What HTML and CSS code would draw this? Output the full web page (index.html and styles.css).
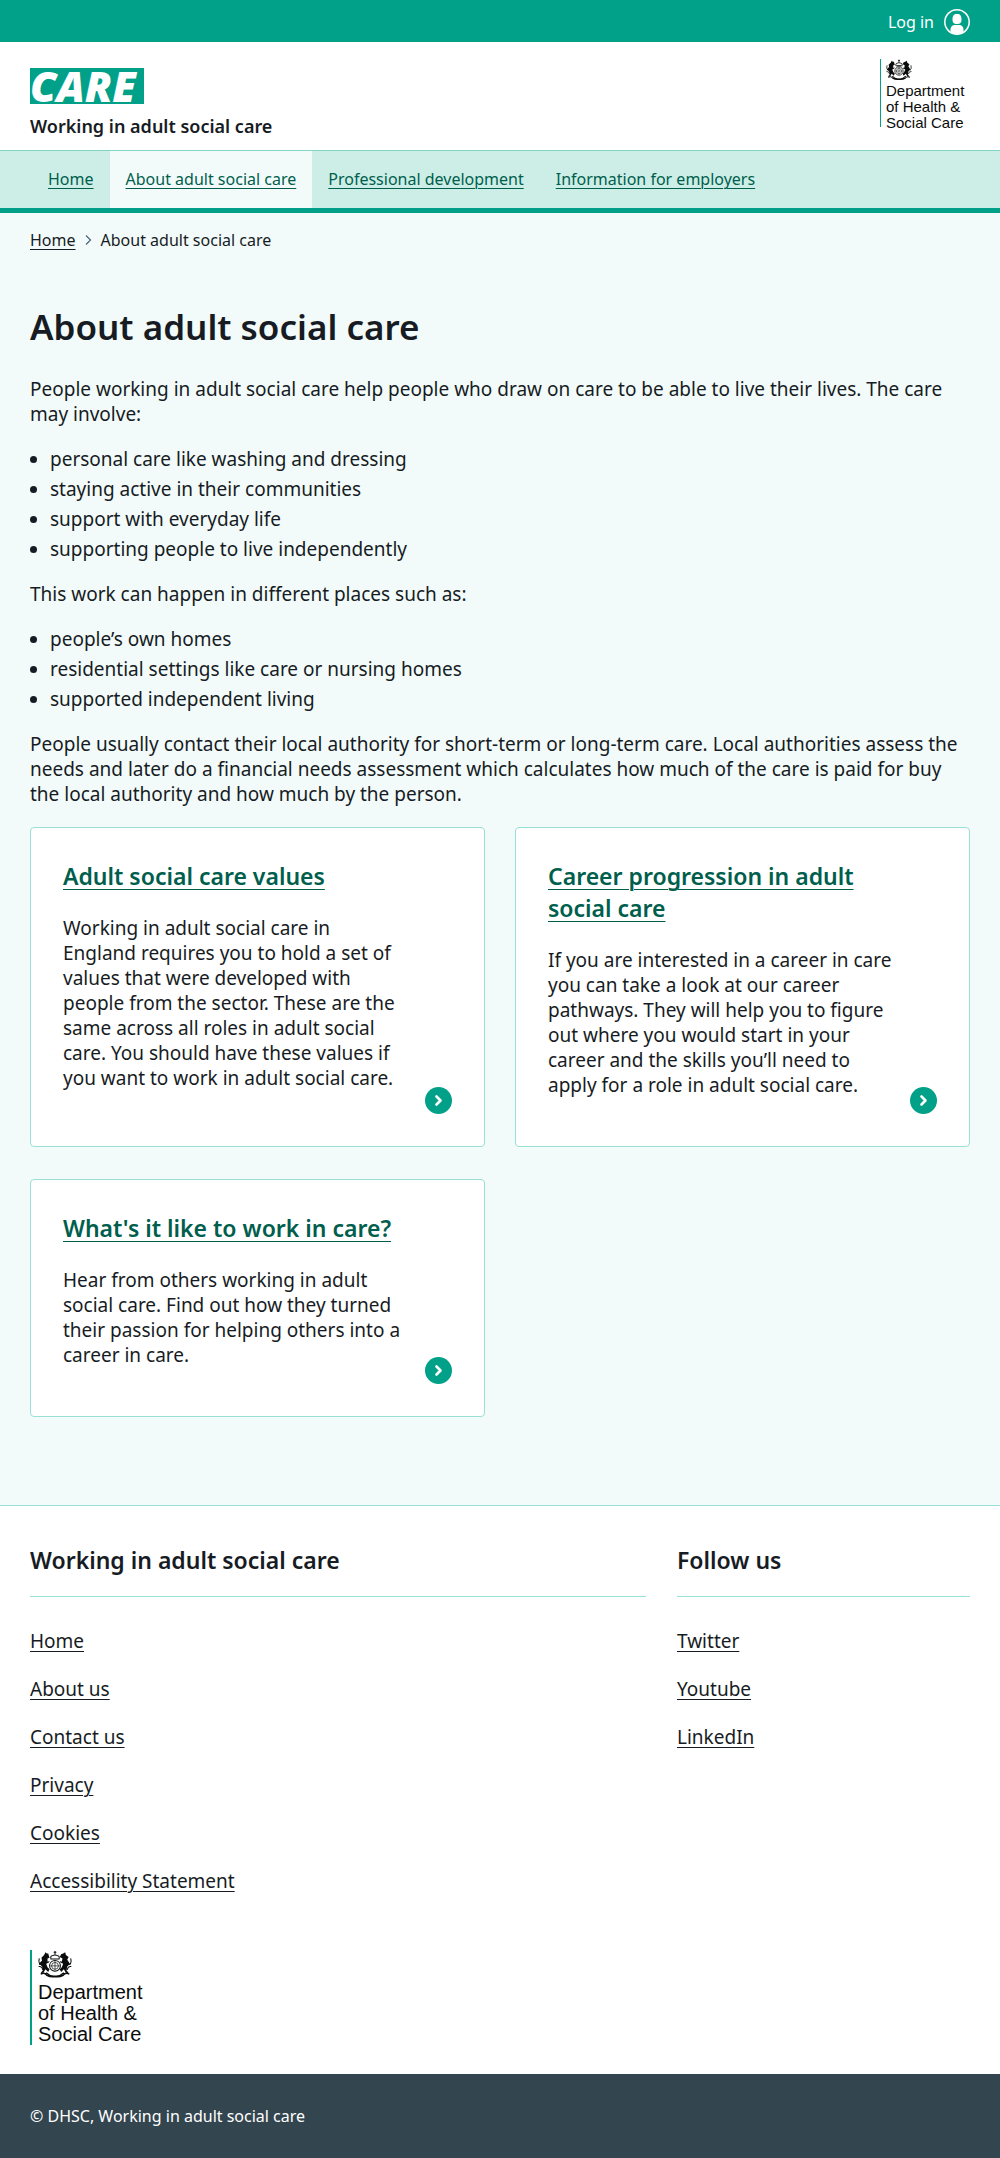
FILE: index.html
```html
<!DOCTYPE html>
<html lang="en">
<head>
<meta charset="utf-8">
<meta name="viewport" content="width=device-width, initial-scale=1">
<title>About adult social care</title>
<link rel="stylesheet" href="styles.css">
</head>
<body>
<svg class="defs" aria-hidden="true">
  <symbol id="crest" viewBox="0 0 50 42">
    <g fill="none" stroke="currentColor" stroke-width="1.500">
      <circle cx="25" cy="23" r="8"/>
      <circle cx="25" cy="23" r="5" stroke-width="1"/>
      <path d="M25 16v14M18 23h14" stroke-width="1"/>
      <path d="M19 13q-1-5 2-5q4-2 8 0q3 0 2 5zM21 13h8M25 7V1M23 3h4"/>
      <path d="M4 35q6-3 9 2q5 3 12 2q7 1 12-2q3-5 9-2M12 33q6 6 13 5q7 1 13-5" stroke-width="2"/>
      <path d="M2 12q-2 7 2 9M1 24q5-1 6 5M48 12q2 7-2 9M49 24q-5-1-6 5"/>
    </g>
    <path fill="currentColor" d="M9 7l2-4 2 2 2 0 1 3 1 3-3 1v5l3-1-1 2-4 2 2 5 3 3-2 4-4-4-3 5-4 1 1-2 2-2-1-6-3-3-2 1 2-4 3-3-1-4zM41 7l-1-4-3 2-3 1-2 4 4 2-1 5-3-1 1 2 4 2-2 5-3 3 2 4 4-4 3 5 4 1-1-2-2-2 1-6 3-3 2 1-3-5-2-3 2-4z"/>
  </symbol>
  <symbol id="arrow" viewBox="0 0 27 27">
    <circle cx="13.500" cy="13.500" r="13.500" fill="#00a188"/>
    <path d="M11.500 9.500l4 4-4 4" fill="none" stroke="#fff" stroke-width="2.600" stroke-linecap="round" stroke-linejoin="round"/>
  </symbol>
</svg>

<div class="account">
  <a class="account-link" href="#">Log in
    <svg class="account-icon" viewBox="0 0 26 26" aria-hidden="true">
      <circle cx="13" cy="13" r="12.200" fill="none" stroke="#fff" stroke-width="1.500"/>
      <path fill="#fff" d="M13 5c3.500 0 4.500 2 4.500 5.500S16 15 13 15s-4.500-1-4.500-4.500S9.500 5 13 5zM6.500 23v-2.500c0-3 2-4.500 4-4.500h5c2 0 4 1.500 4 4.500V23q-6.500 4-13 0z"/>
    </svg>
  </a>
</div>

<header class="header">
  <a class="brand" href="#">
    <span class="brand-mark">CARE</span>
    <span class="brand-name">Working in adult social care</span>
  </a>
  <a class="dept" href="#">
    <svg class="dept-crest" aria-hidden="true"><use href="#crest"/></svg>
    <span class="dept-name">Department<br>of Health &amp;<br>Social Care</span>
  </a>
</header>

<nav class="nav" aria-label="Primary">
  <a href="#">Home</a>
  <a class="current" href="#" aria-current="page">About adult social care</a>
  <a href="#">Professional development</a>
  <a href="#">Information for employers</a>
</nav>

<main class="main">
  <nav class="crumbs" aria-label="Breadcrumb">
    <a href="#">Home</a>
    <svg viewBox="0 0 7 10" aria-hidden="true"><path d="M1 0.500L5.500 5 1 9.500" fill="none" stroke="#4c6272" stroke-width="1.200"/></svg>
    <span>About adult social care</span>
  </nav>

  <h1>About adult social care</h1>
  <p>People working in adult social care help people who draw on care to be able to live their lives. The care may involve:</p>
  <ul class="bullets">
    <li>personal care like washing and dressing</li>
    <li>staying active in their communities</li>
    <li>support with everyday life</li>
    <li>supporting people to live independently</li>
  </ul>
  <p>This work can happen in different places such as:</p>
  <ul class="bullets">
    <li>people’s own homes</li>
    <li>residential settings like care or nursing homes</li>
    <li>supported independent living</li>
  </ul>
  <p>People usually contact their local authority for short-term or long-term care. Local authorities assess the needs and later do a financial needs assessment which calculates how much of the care is paid for buy the local authority and how much by the person.</p>

  <div class="cards">
    <article class="card">
      <div>
        <h2><a href="#">Adult social care values</a></h2>
        <p>Working in adult social care in England requires you to hold a set of values that were developed with people from the sector. These are the same across all roles in adult social care. You should have these values if you want to work in adult social care.</p>
      </div>
      <svg class="card-arrow" aria-hidden="true"><use href="#arrow"/></svg>
    </article>
    <article class="card">
      <div>
        <h2><a href="#">Career progression in adult social care</a></h2>
        <p>If you are interested in a career in care you can take a look at our career pathways. They will help you to figure out where you would start in your career and the skills you’ll need to apply for a role in adult social care.</p>
      </div>
      <svg class="card-arrow" aria-hidden="true"><use href="#arrow"/></svg>
    </article>
    <article class="card">
      <div>
        <h2><a href="#">What's it like to work in care?</a></h2>
        <p>Hear from others working in adult social care. Find out how they turned their passion for helping others into a career in care.</p>
      </div>
      <svg class="card-arrow" aria-hidden="true"><use href="#arrow"/></svg>
    </article>
  </div>
</main>

<footer>
  <div class="footer">
    <div class="footer-columns">
      <section>
        <h2>Working in adult social care</h2>
        <ul class="links">
          <li><a href="#">Home</a></li>
          <li><a href="#">About us</a></li>
          <li><a href="#">Contact us</a></li>
          <li><a href="#">Privacy</a></li>
          <li><a href="#">Cookies</a></li>
          <li><a href="#">Accessibility Statement</a></li>
        </ul>
      </section>
      <section>
        <h2>Follow us</h2>
        <ul class="links">
          <li><a href="#">Twitter</a></li>
          <li><a href="#">Youtube</a></li>
          <li><a href="#">LinkedIn</a></li>
        </ul>
      </section>
    </div>
    <a class="dept dept-large" href="#">
      <svg class="dept-crest" aria-hidden="true"><use href="#crest"/></svg>
      <span class="dept-name">Department<br>of Health &amp;<br>Social Care</span>
    </a>
  </div>
  <div class="copyright">© DHSC, Working in adult social care</div>
</footer>
</body>
</html>
```
FILE: styles.css
```css
* { box-sizing: border-box; }

body {
  margin: 0;
  background: #fff;
  color: #171c24;
  font: 19px/25px "Noto Sans", "Open Sans", sans-serif;
}

h1, h2, p, ul { margin: 0; }
a { color: inherit; text-underline-offset: 3px; text-decoration-thickness: 1px; }
h2 a { text-underline-offset: 4px; }
.defs { position: absolute; width: 0; height: 0; }

.account {
  display: flex;
  justify-content: flex-end;
  padding: 9px 30px 7px;
  background: #00a188;
}
.account-link {
  display: flex;
  align-items: center;
  gap: 10px;
  color: #fff;
  font-size: 16px;
  line-height: 26px;
  text-decoration: none;
}
.account-icon { width: 26px; height: 26px; }

.header {
  display: flex;
  justify-content: space-between;
  align-items: flex-start;
  padding: 17px 30px 12px;
}
.brand { padding-top: 9px; text-decoration: none; }
.brand-mark {
  display: block;
  width: 114px;
  height: 36px;
  background: #00a188;
  color: #fff;
  font: italic 800 42px/35px "Open Sans", sans-serif;
}
.brand-name {
  display: block;
  margin-top: 10px;
  font-size: 18px;
  font-weight: 600;
  line-height: 24px;
}

.dept {
  display: block;
  width: 90px;
  padding-left: 5px;
  border-left: 1px solid #00a188;
  color: #0b0c0c;
  font: 15px/16px "Liberation Sans", Arial, sans-serif;
  text-decoration: none;
}
.dept-crest { display: block; width: 26px; height: 22px; margin-bottom: 2px; }
/* the rule beside the name ends at the last baseline */
.dept-name { display: block; margin-bottom: -4px; }

.nav {
  display: flex;
  padding: 0 32px;
  background: #cceee7;
  border-top: 1px solid #84d6c4;
  border-bottom: 5px solid #00a188;
  color: #005e4d;
}
.nav a { padding: 16px 16px 17px; font-size: 16px; line-height: 24px; }
.nav .current { background: #f2fbfa; }

.main { padding: 15px 30px 88px; background: #f2fbfa; }
.crumbs {
  display: flex;
  align-items: center;
  gap: 9px;
  margin-bottom: 51px;
  font-size: 16px;
  line-height: 24px;
}
.crumbs svg { width: 7px; height: 10px; }
h1 { margin-bottom: 26px; font-size: 35px; font-weight: 600; line-height: 48px; }
.main p { margin-bottom: 20px; }
.bullets { margin-bottom: 20px; padding-left: 20px; }
.bullets li { margin-bottom: 5px; }

.cards {
  display: grid;
  grid-template-columns: 1fr 1fr;
  gap: 32px 30px;
}
.card {
  display: grid;
  grid-template-columns: 1fr 27px;
  column-gap: 18px;
  padding: 32px;
  background: #fff;
  border: 1px solid #99e0d6;
  border-radius: 4px;
}
.card h2 {
  margin-bottom: 24px;
  color: #005e4d;
  font-size: 23px;
  font-weight: 600;
  line-height: 32px;
}
.card p { margin-bottom: 16px; }
.card-arrow { width: 27px; height: 27px; align-self: end; }

.footer { padding: 38px 30px 33px; border-top: 1px solid #99e0d6; }
.footer-columns { display: grid; grid-template-columns: 616fr 293fr; column-gap: 31px; }
.footer h2 {
  padding-bottom: 20px;
  border-bottom: 1px solid #99e0d6;
  font-size: 23px;
  font-weight: 600;
  line-height: 32px;
}
.links { padding: 32px 0 0; list-style: none; }
.links li { padding-bottom: 23px; }
.dept-large { width: 120px; margin-top: 33px; padding-left: 6px; border-left-width: 2px; font-size: 20px; line-height: 21px; }
.dept-large .dept-crest { width: 34px; height: 29px; margin-bottom: 3px; }

.copyright {
  padding: 30px;
  background: #33454f;
  color: #fff;
  font-size: 16px;
  line-height: 24px;
}
```
